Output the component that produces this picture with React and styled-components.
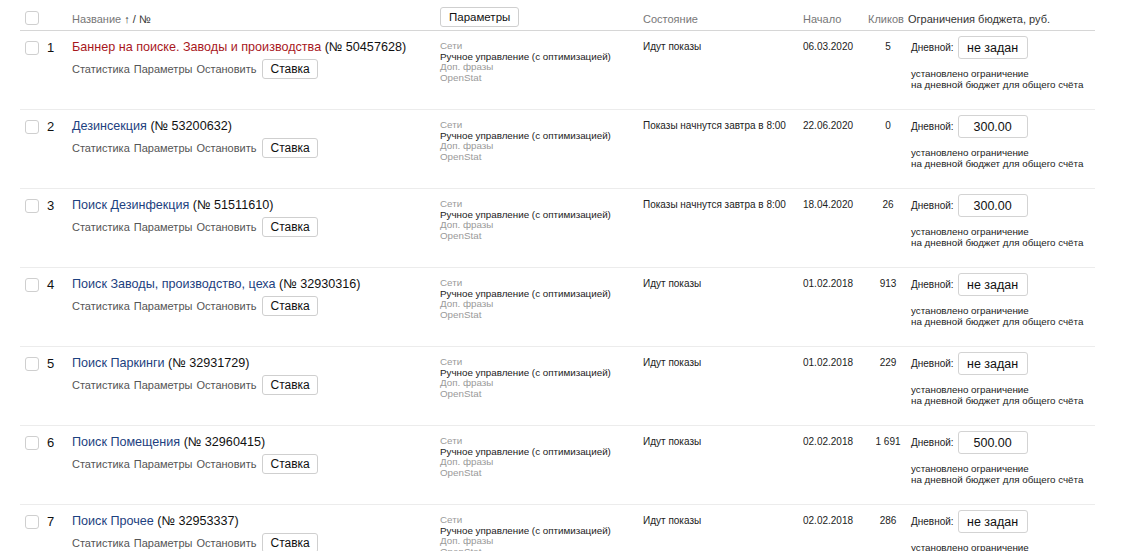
import styled, { createGlobalStyle } from "styled-components";

const Global = createGlobalStyle`
  body {
    margin: 0;
    background: #fff;
    font-family: "Liberation Sans", Arial, sans-serif;
    color: #222;
    overflow: hidden;
  }
`;

const cols = "24px 28px 368px 203px 160px 65px 40px 187px";

const Table = styled.div`
  margin-left: 20px;
  width: 1075px;
`;

const HeadRow = styled.div`
  display: grid;
  grid-template-columns: ${cols};
  height: 26px;
  padding-top: 4px;
  align-items: center;
  border-bottom: 1px solid #d6d6d6;
  font-size: 11px;
  color: #777;
`;

const HeadText = styled.div`
  padding-top: 3px;
`;

const Row = styled.div`
  display: grid;
  grid-template-columns: ${cols};
  height: 78px;
  border-bottom: 1px solid #ececec;
  align-items: start;
`;

const Check = styled.span`
  display: block;
  width: 12px;
  height: 12px;
  border: 1px solid #cfcfcf;
  border-radius: 3px;
  margin-left: 5px;
  margin-top: ${(p) => (p.$head ? "2px" : "10px")};
`;

const Num = styled.div`
  font-size: 13px;
  padding-top: 9px;
  padding-left: 3px;
  color: #111;
`;

const HeadCell = styled(HeadText)`
  color: ${(p) => (p.$dark ? "#333" : "#777")};
  text-align: ${(p) => p.$align || "left"};
  b {
    font-weight: normal;
    color: #333;
  }
`;

const NameCell = styled.div`
  padding-top: 8px;
`;

const Title = styled.div`
  font-size: 12.6px;
  line-height: 16px;
  color: #111;
  white-space: nowrap;
  span {
    color: ${(p) => (p.$red ? "#a8171d" : "#1d4180")};
  }
`;

const Actions = styled.div`
  display: flex;
  align-items: center;
  margin-top: 4px;
  font-size: 11px;
  color: #555;
  gap: 4px;
`;

const Btn = styled.button`
  font-family: inherit;
  font-size: ${(p) => p.$size || 12}px;
  color: #111;
  background: #fff;
  border: 1px solid #cfcfcf;
  border-radius: 3px;
  height: 20px;
  padding: 0 ${(p) => p.$pad || 7}px;
  margin-left: ${(p) => (p.$flush ? 0 : 2)}px;
`;

const Params = styled.div`
  padding-top: 10px;
  font-size: 9.8px;
  line-height: 10.7px;
  color: #9a9a9a;
  div:nth-child(2) {
    color: #222;
  }
`;

const Plain = styled.div`
  padding-top: 10px;
  font-size: 10px;
  line-height: 12px;
  color: #222;
  text-align: ${(p) => p.$align || "left"};
  white-space: nowrap;
`;

const Budget = styled.div`
  padding-top: 5px;
  padding-left: 3px;
`;

const BudgetLine = styled.div`
  display: flex;
  align-items: center;
  gap: 4px;
  font-size: 10px;
`;

const Amount = styled.div`
  width: 68px;
  height: 21px;
  border: 1px solid #d3d3d3;
  border-radius: 3px;
  display: flex;
  align-items: center;
  justify-content: center;
  font-size: 12.5px;
  color: #111;
`;

const Note = styled.div`
  margin-top: 9px;
  font-size: 9.8px;
  line-height: 11px;
  color: #222;
`;

const rows = [
  { n: 1, name: "Баннер на поиске. Заводы и производства", id: "50457628", red: true, status: "Идут показы", start: "06.03.2020", clicks: "5", budget: "не задан" },
  { n: 2, name: "Дезинсекция", id: "53200632", status: "Показы начнутся завтра в 8:00", start: "22.06.2020", clicks: "0", budget: "300.00" },
  { n: 3, name: "Поиск Дезинфекция", id: "51511610", status: "Показы начнутся завтра в 8:00", start: "18.04.2020", clicks: "26", budget: "300.00" },
  { n: 4, name: "Поиск Заводы, производство, цеха", id: "32930316", status: "Идут показы", start: "01.02.2018", clicks: "913", budget: "не задан" },
  { n: 5, name: "Поиск Паркинги", id: "32931729", status: "Идут показы", start: "01.02.2018", clicks: "229", budget: "не задан" },
  { n: 6, name: "Поиск Помещения", id: "32960415", status: "Идут показы", start: "02.02.2018", clicks: "1 691", budget: "500.00" },
  { n: 7, name: "Поиск Прочее", id: "32953337", status: "Идут показы", start: "02.02.2018", clicks: "286", budget: "не задан" },
];

export default function App() {
  return (
    <>
      <Global />
      <Table>
        <HeadRow>
          <div>
            <Check $head />
          </div>
          <div />
          <HeadCell>
            Название <b>↑ / №</b>
          </HeadCell>
          <div>
            <Btn $flush $pad={8} $size={11.5}>
              Параметры
            </Btn>
          </div>
          <HeadCell>Состояние</HeadCell>
          <HeadCell>Начало</HeadCell>
          <HeadCell>Кликов</HeadCell>
          <HeadCell $dark>Ограничения бюджета, руб.</HeadCell>
        </HeadRow>
        {rows.map((r) => (
          <Row key={r.n}>
            <div>
              <Check />
            </div>
            <Num>{r.n}</Num>
            <NameCell>
              <Title $red={r.red}>
                <span>{r.name}</span> (№ {r.id})
              </Title>
              <Actions>
                <span>Статистика</span>
                <span>Параметры</span>
                <span>Остановить</span>
                <Btn>Ставка</Btn>
              </Actions>
            </NameCell>
            <Params>
              <div>Сети</div>
              <div>Ручное управление (с оптимизацией)</div>
              <div>Доп. фразы</div>
              <div>OpenStat</div>
            </Params>
            <Plain>{r.status}</Plain>
            <Plain>{r.start}</Plain>
            <Plain $align="center">{r.clicks}</Plain>
            <Budget>
              <BudgetLine>
                Дневной:
                <Amount>{r.budget}</Amount>
              </BudgetLine>
              <Note>
                установлено ограничение
                <br />
                на дневной бюджет для общего счёта
              </Note>
            </Budget>
          </Row>
        ))}
      </Table>
    </>
  );
}
